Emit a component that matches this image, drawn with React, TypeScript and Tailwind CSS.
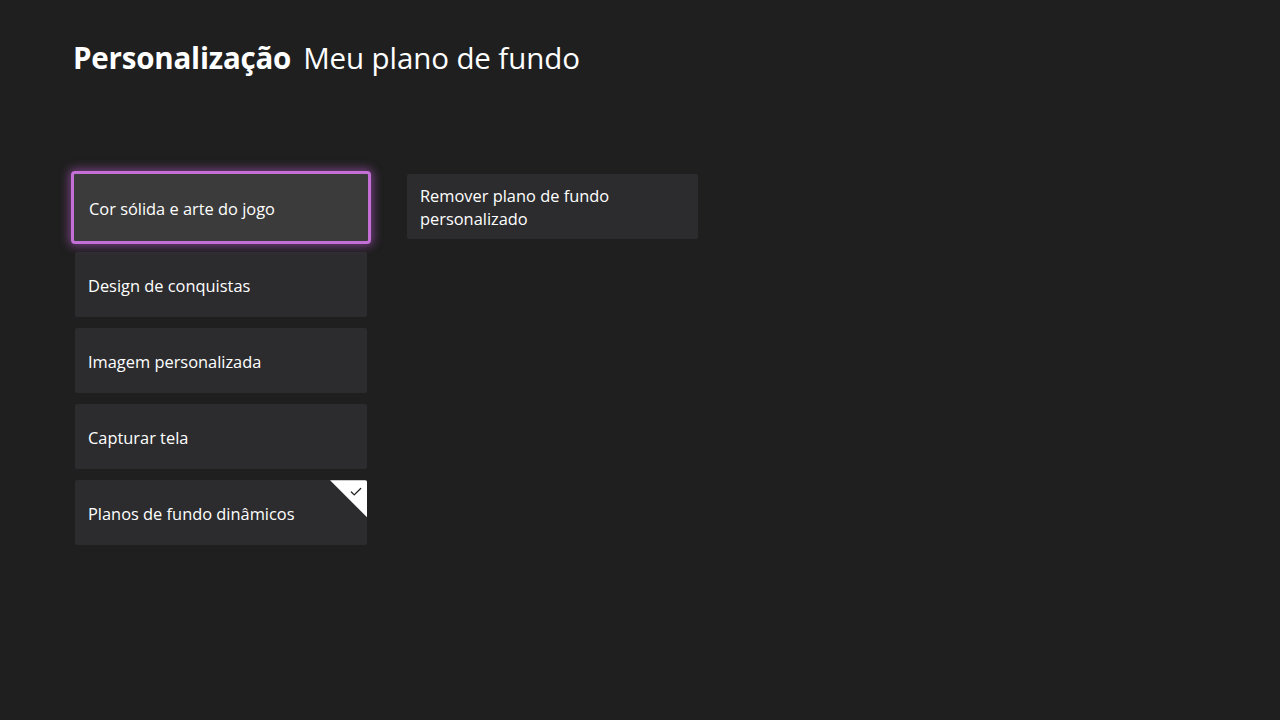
import { Check } from 'lucide-react';

const items = [
    'Design de conquistas',
    'Imagem personalizada',
    'Capturar tela',
];

export default function App() {
    return (
        <div className="w-[1280px] h-[720px] bg-[#1f1f1f] text-white overflow-hidden" style={{ fontFamily: '"Open Sans", "Noto Sans", sans-serif' }}>
            <div className="pt-[36px] pl-[73px] flex items-baseline gap-[12px]">
                <span className="text-[29.5px] font-bold tracking-[-0.2px]">Personalização</span>
                <span className="text-[29.5px] tracking-[-0.1px]">Meu plano de fundo</span>
            </div>

            <div className="flex items-start mt-[96px] pl-[75px] gap-[40px]">
                <div className="flex flex-col w-[292px] gap-[11px]">
                    {/* focused tile */}
                    <div className="h-[65px] relative">
                        <div className="absolute -inset-x-[4px] -top-[5px] -bottom-[3px] rounded-[4px] border-[3px] border-[#c36fd6] bg-[#3b3b3b] shadow-[0_0_10px_2px_rgba(190,90,210,0.55)] flex items-center pl-[15px] pt-[3px] text-[16.4px]">
                            Cor sólida e arte do jogo
                        </div>
                    </div>
                    {items.map((item) => (
                        <div key={item} className="h-[65px] bg-[#2c2c2e] rounded-[2px] flex items-center pl-[13px] pt-[3px] text-[16.4px]">
                            {item}
                        </div>
                    ))}
                    <div className="h-[65px] bg-[#2c2c2e] rounded-[2px] flex items-center pl-[13px] pt-[3px] text-[16.4px] relative overflow-hidden">
                        Planos de fundo dinâmicos
                        <div className="absolute top-0 right-0 w-[37px] h-[37px] bg-white [clip-path:polygon(0_0,100%_0,100%_100%)]" />
                        <Check className="absolute top-[5px] right-[4px] w-[14px] h-[14px] text-[#222]" strokeWidth={2.2} />
                    </div>
                </div>

                <div className="w-[291px] h-[65px] -mt-[2px] bg-[#2c2c2e] rounded-[2px] flex items-center pl-[13px] pr-[10px] pt-[1px] text-[16.4px] leading-[23px]">
                    Remover plano de fundo personalizado
                </div>
            </div>
        </div>
    );
}
